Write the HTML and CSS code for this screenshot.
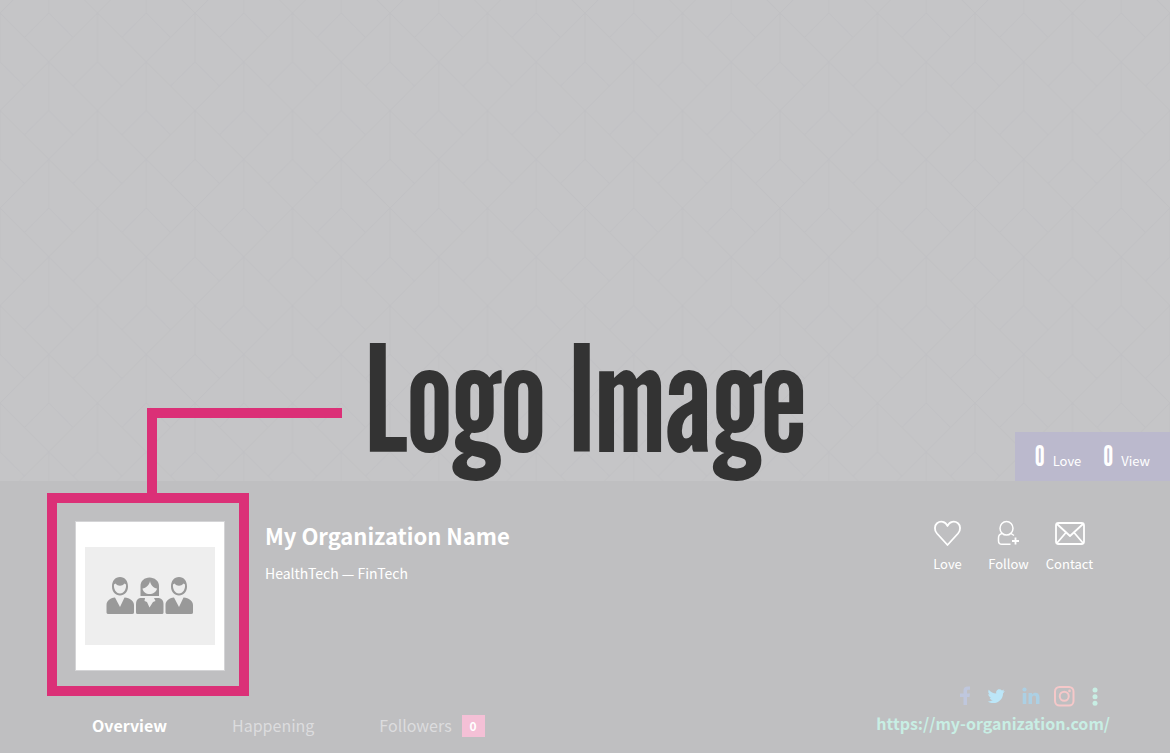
FILE: index.html
```html
<!DOCTYPE html>
<html lang="en">
<head>
<meta charset="utf-8">
<meta name="viewport" content="width=device-width, initial-scale=1">
<title>My Organization Name</title>
<link rel="stylesheet" href="styles.css">
</head>
<body>
<main class="page">
  <section class="cover">
    <svg class="cover-pattern" aria-hidden="true">
      <defs>
        <pattern id="lattice" y="13" width="97.5" height="97.5" patternUnits="userSpaceOnUse">
          <path d="M0 0L97.5 97.5M97.5 0L0 97.5M0 0V48.75M97.5 0V48.75M48.75 48.75V97.5M24.4 24.4L48.75 0L73.1 24.4M0 48.75L24.4 73.1M97.5 48.75L73.1 73.1" fill="none" stroke="#c1c1c4" stroke-width="1"/>
        </pattern>
      </defs>
      <rect width="100%" height="100%" fill="url(#lattice)"/>
    </svg>
    <h2 class="caption">Logo Image</h2>
    <dl class="stats">
      <div class="stat"><dd>0</dd><dt>Love</dt></div>
      <div class="stat"><dd>0</dd><dt>View</dt></div>
    </dl>
  </section>

  <section class="profile">
    <div class="left">
      <div class="identity">
        <div class="frame">
          <div class="connector"></div>
          <div class="logo">
            <div class="logo-image">
              <svg width="88" height="40" viewBox="0 0 88 40" role="img" aria-label="Organization logo">
                <defs>
                  <g id="man">
                    <path fill-rule="evenodd" d="M14 1C19 1 22 5 22 10.500C22 16 18.500 19.500 14 19.500S6 16 6 10.500C6 5 9 1 14 1ZM8 8.500C7.500 13 10 17.500 14 17.500S20.500 13 20 8.500L18.500 7.500C16 10.500 12 10.500 9.500 7.500Z"/>
                    <path d="M9 21.500L14 31L18.500 21.500C24 22 28 25 28 29V36.500Q28 38 26 38H2.500Q.500 38 .500 36.500V29C.500 25 4 22 9 21.500Z"/>
                  </g>
                </defs>
                <g fill="#999">
                  <use href="#man"/>
                  <use href="#man" x="59"/>
                  <path fill-rule="evenodd" d="M34.500 20V10C34.500 5 38.500 1.500 43.500 1.500S53 5 53 10V20ZM44 5C43.500 9 40 12 36.500 12.500C37 16 40 18 43.500 18S50.500 16 51 12.500C47.500 12 44.500 9 44 5Z"/>
                  <path d="M34 22H39L38.500 25L41 26L43.500 31.500L47 26L49.500 25L48 22H53Q57.500 23 57.500 28V36.500Q57.500 38 56 38H31.500Q30 38 30 36.500V28Q30 23 34 22Z"/>
                </g>
              </svg>
            </div>
          </div>
        </div>
        <div class="about">
          <h1>My Organization Name</h1>
          <p>HealthTech — FinTech</p>
        </div>
      </div>
      <nav class="tabs">
        <a class="active" href="#overview">Overview</a>
        <a href="#happening">Happening</a>
        <a href="#followers">Followers <span class="badge">0</span></a>
      </nav>
    </div>

    <div class="right">
      <div class="actions">
        <button type="button">
          <svg width="32" height="28" viewBox="0 0 32 28" aria-hidden="true"><path d="M15.500 26L5 14.500C2 11 2.500 6.500 5 4.300C8.500 1.500 13.500 2.500 15.500 7C17.500 2.500 22.500 1.500 26 4.300C28.500 6.500 29 11 26 14.500Z" fill="none" stroke="#fff" stroke-width="1.800" stroke-linejoin="round"/></svg>
          Love
        </button>
        <button type="button">
          <svg width="32" height="28" viewBox="0 0 32 28" aria-hidden="true"><g fill="none" stroke="#fff" stroke-width="1.500"><ellipse cx="13.500" cy="9.300" rx="6.500" ry="6.800"/><path d="M9 14.500C6.500 15 5.500 16.500 5.500 19V22Q5.500 25.300 9 25.300H17.500M18 14.500L21 16.500"/><path d="M22.500 18.500V25.500M19 22H26" stroke-width="1.800"/></g></svg>
          Follow
        </button>
        <button type="button">
          <svg width="32" height="28" viewBox="0 0 32 28" aria-hidden="true"><g fill="none" stroke="#fff" stroke-width="1.800" stroke-linejoin="round"><rect x="2" y="4" width="28" height="21" rx="2.500"/><path d="M3 5L16 17L29 5M3 24L12 13.500M29 24L20 13.500"/></g></svg>
          Contact
        </button>
      </div>
      <div class="links">
        <div class="social">
          <a href="#facebook" aria-label="Facebook"><svg width="22" height="22" viewBox="0 0 22 22"><path d="M12.500 20V12H9V8.500H12.500V5.500C12.500 2.500 14 1.500 17 1.500H19V4.700H17.500C16.300 4.700 16 5.200 16 6.200V8.500H19L18.500 12H16V20Z" fill="#bfc7dd"/></svg></a>
          <a href="#twitter" aria-label="Twitter"><svg width="22" height="22" viewBox="0 0 24 24"><path d="M21.500 6.500C20.800 6.800 20 7 19.300 7.100C20.100 6.600 20.700 5.900 21 5C20.200 5.500 19.400 5.800 18.500 6C15.900 3.200 11.300 5.300 12.300 9.300C9 9.100 6.100 7.500 4.100 5.100C3 7 3.600 9.200 5.300 10.300C4.700 10.300 4.100 10.100 3.600 9.800C3.600 11.700 4.900 13.300 6.700 13.700C6.200 13.900 5.600 13.900 5 13.800C5.500 15.300 6.900 16.300 8.500 16.400C7 17.600 5 18.100 3 17.900C10.500 22.500 19.800 17.500 19.700 8.900C20.400 8.200 21.100 7.400 21.500 6.500Z" fill="#bce6f8"/></svg></a>
          <a href="#linkedin" aria-label="LinkedIn"><svg width="22" height="22" viewBox="0 0 22 22"><g fill="#acd0e4"><circle cx="5.500" cy="4.500" r="2.100"/><path d="M3.700 8H7.300V19H3.700ZM9.500 8H13V9.500C15 6.500 20.500 7 20.500 12V19H17V13C17 9.500 13 10 13 13V19H9.500Z"/></g></svg></a>
          <a href="#instagram" aria-label="Instagram"><svg width="22" height="22" viewBox="0 0 22 22"><g fill="none" stroke="#f5c8c9" stroke-width="2"><rect x="2" y="2" width="18.500" height="18.500" rx="4.500"/><circle cx="11.250" cy="11.250" r="4.500"/></g><circle cx="16.500" cy="5.900" r="1.300" fill="#f5c8c9"/></svg></a>
          <a class="more" href="#more" aria-label="More"><svg width="6" height="22" viewBox="0 0 6 22"><g fill="#c8eee4"><circle cx="3" cy="5" r="2.500"/><circle cx="3" cy="11.700" r="2.500"/><circle cx="3" cy="18.300" r="2.500"/></g></svg></a>
        </div>
        <a class="site" href="https://my-organization.com/">https://my-organization.com/</a>
      </div>
    </div>
  </section>
</main>
</body>
</html>
```
FILE: styles.css
```css
* {
  box-sizing: border-box;
}

body {
  margin: 0;
  font-family: "Noto Sans CJK SC", "Noto Sans", sans-serif;
  color: #fff;
  background: #bfbfc1;
}

h1, h2, p, dl, dd {
  margin: 0;
}

a {
  color: inherit;
  text-decoration: none;
}

svg {
  display: block;
}

.page {
  display: flex;
  flex-direction: column;
  min-height: 100vh;
}

.cover {
  position: relative;
  flex: 1;
  display: flex;
  flex-direction: column;
  justify-content: flex-end;
  background: #c5c5c7;
}

.cover-pattern {
  position: absolute;
  inset: 0;
  width: 100%;
  height: 100%;
}

.caption {
  position: relative;
  padding-bottom: 8px;
  font-family: "League Gothic", "Open Sans Condensed", "Roboto Condensed", Roboto, sans-serif;
  font-size: 147px;
  font-weight: 400;
  line-height: 150px;
  text-align: center;
  color: #333;
}

.stats {
  position: absolute;
  right: 0;
  bottom: 0;
  display: flex;
  gap: 22px;
  padding: 8px 20px 0;
  height: 49px;
  background: #bbb9cd;
}

.stat {
  display: flex;
  align-items: baseline;
  gap: 8px;
  font-size: 13px;
  line-height: 32px;
}

.stat dd {
  font-family: "League Gothic", "Open Sans Condensed", "Roboto Condensed", Roboto, sans-serif;
  font-size: 28px;
}

.profile {
  display: flex;
  justify-content: space-between;
  padding: 12px 60px 16px 47px;
  background: #bfbfc1;
}

.identity {
  display: flex;
  gap: 16px;
}

.frame {
  position: relative;
  padding: 18px 14px 15px 18px;
  border: 10px solid #db3077;
}

.connector {
  position: absolute;
  left: 90px;
  bottom: calc(100% + 10px);
  width: 195px;
  height: 85px;
  border: solid #db3077;
  border-width: 10px 0 0 10px;
}

.logo {
  display: flex;
  align-items: center;
  padding: 0 9px;
  width: 150px;
  height: 150px;
  border: 1px solid #d4d4d6;
  background: #fff;
}

.logo-image {
  flex: 1;
  display: flex;
  align-items: center;
  justify-content: center;
  height: 98px;
  background: #eee;
}

.about {
  padding-top: 26px;
}

.about h1 {
  font-size: 22px;
  font-weight: 700;
  line-height: 32px;
}

.about p {
  margin-top: 12px;
  font-size: 14px;
  line-height: 20px;
}

.tabs {
  display: flex;
  gap: 65px;
  margin-top: 17px;
  padding-left: 45px;
  font-size: 16px;
  line-height: 24px;
  color: #dcdcde;
}

.tabs a {
  display: flex;
  align-items: flex-end;
  gap: 10px;
}

.tabs .active {
  font-weight: 700;
  color: #fff;
}

.badge {
  width: 23px;
  font-size: 12px;
  font-weight: 700;
  line-height: 22px;
  text-align: center;
  color: #fff;
  background: #f4c0d6;
}

.right {
  display: flex;
  flex-direction: column;
  justify-content: space-between;
  align-items: flex-end;
}

.actions {
  display: grid;
  grid-template-columns: repeat(3, 61px);
  margin-right: 10px;
  padding-top: 26px;
}

.actions button {
  display: flex;
  flex-direction: column;
  align-items: center;
  gap: 7px;
  padding: 0;
  border: 0;
  font: inherit;
  font-size: 13px;
  line-height: 20px;
  color: inherit;
  background: none;
  cursor: pointer;
}

.links {
  display: flex;
  flex-direction: column;
  align-items: flex-end;
  gap: 4px;
  padding-bottom: 2px;
}

.social {
  display: flex;
  gap: 12px;
  padding-right: 12px;
}

.more {
  margin-left: 5px;
}

.site {
  font-size: 16px;
  font-weight: 700;
  line-height: 24px;
  color: #c8eee4;
}
```
